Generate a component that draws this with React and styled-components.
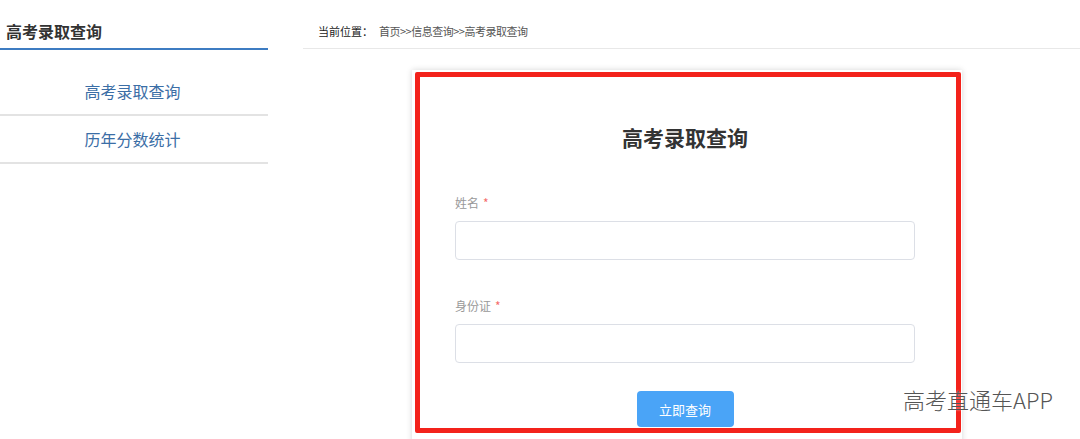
import React from 'react';
import styled, { createGlobalStyle } from 'styled-components';

const GlobalStyle = createGlobalStyle`
body {
  margin: 0;
  background: #ffffff;
  font-family: "Noto Sans CJK SC", "Noto Sans", sans-serif;
  overflow: hidden;
}`

const App = () => {
    return (
        <>
        <GlobalStyle />
        <Page>
            <Sidebar>
                <SideTitle>高考录取查询</SideTitle>
                <Menu>
                    <MenuItem>高考录取查询</MenuItem>
                    <MenuItem>历年分数统计</MenuItem>
                </Menu>
            </Sidebar>
            <Main>
                <Crumbs>
                    <CrumbLabel>当前位置：</CrumbLabel>
                    <CrumbPath>首页&gt;&gt;信息查询&gt;&gt;高考录取查询</CrumbPath>
                </Crumbs>
                <Card>
                    <Mark />
                    <CardTitle>高考录取查询</CardTitle>
                    <Field>
                        <Label>姓名<Star>*</Star></Label>
                        <Input type="text" />
                    </Field>
                    <Field $last>
                        <Label>身份证<Star>*</Star></Label>
                        <Input type="text" />
                    </Field>
                    <Actions>
                        <Button>立即查询</Button>
                    </Actions>
                </Card>
            </Main>
            <Watermark>高考直通车APP</Watermark>
        </Page>
        </>
    )
}

const Page = styled.div`
display: flex;
flex-direction: row;
position: relative;
width: 1080px;
height: 439px;
overflow: hidden;`

const Sidebar = styled.div`
width: 268px;
flex-shrink: 0;`

const SideTitle = styled.div`
height: 50px;
display: flex;
align-items: center;
padding: 13px 0 0 6px;
font-size: 16px;
font-weight: 700;
color: #333333;
border-bottom: 2px solid #3d7cc2;
box-sizing: border-box;`

const Menu = styled.div`
padding-top: 18px;`

const MenuItem = styled.div`
height: 46px;
line-height: 46px;
text-align: center;
font-size: 16px;
color: #3b6ea6;
padding-right: 3px;
border-bottom: 2px solid #e3e3e3;`

const Main = styled.div`
flex: 1;
margin-left: 35px;`

const Crumbs = styled.div`
height: 49px;
display: flex;
align-items: center;
padding: 13px 0 0 15px;
box-sizing: border-box;
font-size: 11px;
border-bottom: 1px solid #e8e8e8;`

const CrumbLabel = styled.span`
color: #222222;
margin-right: 6px;`

const CrumbPath = styled.span`
color: #555555;
letter-spacing: -0.5px;`

const Card = styled.div`
position: relative;
width: 550px;
min-height: 400px;
margin: 21px 0 0 109px;
padding: 53px 47px 0 43px;
box-sizing: border-box;
background: #ffffff;
box-shadow: 0 0 6px rgba(0, 0, 0, 0.16);`

const Mark = styled.div`
position: absolute;
left: 3px;
top: 2px;
width: 546px;
height: 361px;
border: 5px solid #f3221b;
border-radius: 2px;
box-sizing: border-box;
pointer-events: none;`

const CardTitle = styled.h2`
margin: 0 0 43px 0;
text-align: center;
font-size: 21px;
line-height: 28px;
font-weight: 700;
color: #333333;`

const Field = styled.div`
display: flex;
flex-direction: column;
gap: 9px;
margin-bottom: ${p => (p.$last ? '28px' : '37px')};`

const Label = styled.label`
font-size: 12px;
line-height: 18px;
color: #999999;`

const Star = styled.span`
color: #f56c6c;
margin-left: 4px;`

const Input = styled.input`
width: 460px;
height: 39px;
box-sizing: border-box;
border: 1px solid #dcdfe6;
border-radius: 4px;
outline: none;
padding: 0 12px;`

const Actions = styled.div`
display: flex;
justify-content: center;`

const Button = styled.button`
width: 97px;
height: 36px;
border: none;
border-radius: 4px;
background: #4aa4f7;
color: #ffffff;
font-family: "Noto Sans CJK SC", sans-serif;
font-size: 13px;
cursor: pointer;`

const Watermark = styled.div`
position: absolute;
left: 903px;
top: 385px;
font-size: 22px;
line-height: 28px;
font-weight: 300;
color: #555555;
white-space: nowrap;
text-shadow: 0 0 2px rgba(255, 255, 255, 0.8);`

export default App;
